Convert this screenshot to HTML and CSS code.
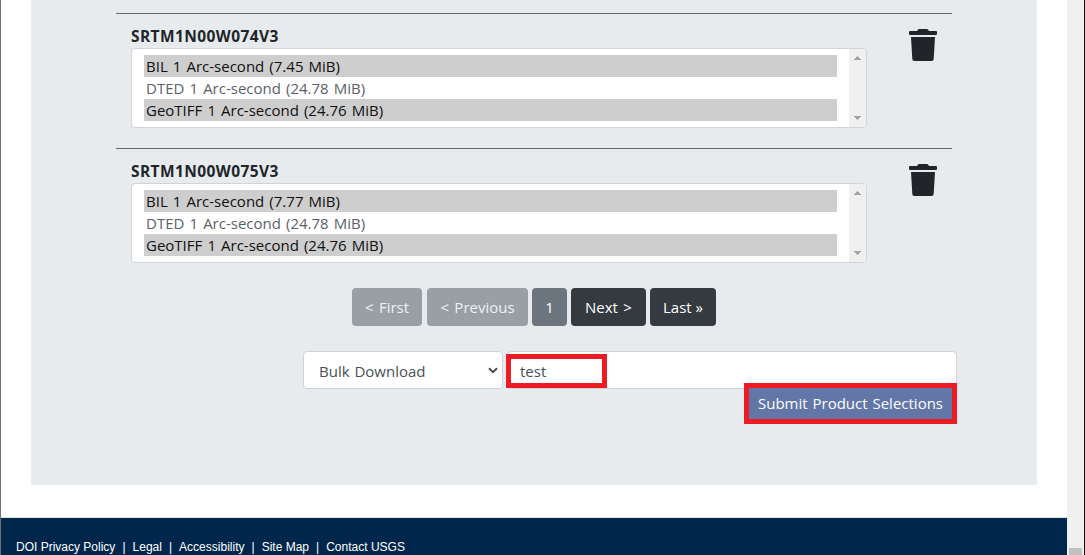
FILE: index.html
```
<!DOCTYPE html>
<html lang="en">
<head>
<meta charset="utf-8">
<title>Product Selections</title>
<link rel="stylesheet" href="styles.css">
</head>
<body>
<div class="window">
  <div class="page">
    <main class="panel">
      <section class="item">
        <div class="item-main">
          <h2 class="item-title">SRTM1N00W074V3</h2>
          <div class="listbox">
            <ul class="options">
              <li class="option selected">BIL 1 Arc-second (7.45 MiB)</li>
              <li class="option">DTED 1 Arc-second (24.78 MiB)</li>
              <li class="option selected">GeoTIFF 1 Arc-second (24.76 MiB)</li>
            </ul>
            <div class="list-scroll">
              <svg width="7" height="4" viewBox="0 0 7 4" shape-rendering="crispEdges"><path d="M3 0h1v1h1v1h1v1h1v1H0V3h1V2h1V1h1z" fill="#a3a3a3"/></svg>
              <svg width="7" height="4" viewBox="0 0 7 4" shape-rendering="crispEdges"><path d="M0 0h7v1H6v1H5v1H4v1H3V3H2V2H1V1H0z" fill="#a3a3a3"/></svg>
            </div>
          </div>
        </div>
        <svg class="trash" width="28" height="32" viewBox="0 0 28 32"><path d="M10 0h8q1 0 2 2h7q1 0 1 1v2q0 1-1 1H1q-1 0-1-1V3q0-1 1-1h7q1-2 2-2zM2 8h24l-1.300 22q-.2 2-2 2H5.300q-1.800 0-2-2z" fill="#212529"/></svg>
      </section>
      <section class="item">
        <div class="item-main">
          <h2 class="item-title">SRTM1N00W075V3</h2>
          <div class="listbox">
            <ul class="options">
              <li class="option selected">BIL 1 Arc-second (7.77 MiB)</li>
              <li class="option">DTED 1 Arc-second (24.78 MiB)</li>
              <li class="option selected">GeoTIFF 1 Arc-second (24.76 MiB)</li>
            </ul>
            <div class="list-scroll">
              <svg width="7" height="4" viewBox="0 0 7 4" shape-rendering="crispEdges"><path d="M3 0h1v1h1v1h1v1h1v1H0V3h1V2h1V1h1z" fill="#a3a3a3"/></svg>
              <svg width="7" height="4" viewBox="0 0 7 4" shape-rendering="crispEdges"><path d="M0 0h7v1H6v1H5v1H4v1H3V3H2V2H1V1H0z" fill="#a3a3a3"/></svg>
            </div>
          </div>
        </div>
        <svg class="trash" width="28" height="32" viewBox="0 0 28 32"><path d="M10 0h8q1 0 2 2h7q1 0 1 1v2q0 1-1 1H1q-1 0-1-1V3q0-1 1-1h7q1-2 2-2zM2 8h24l-1.300 22q-.2 2-2 2H5.300q-1.800 0-2-2z" fill="#212529"/></svg>
      </section>
      <nav class="pager">
        <button class="btn first off">&lt; First</button>
        <button class="btn prev off">&lt; Previous</button>
        <button class="btn num">1</button>
        <button class="btn next">Next &gt;</button>
        <button class="btn last">Last »</button>
      </nav>
      <div class="form">
        <div class="field select"><span>Bulk Download</span>
          <svg width="10" height="7" viewBox="0 0 10 7"><path d="M1 1.200l4 4 4-4" fill="none" stroke="#454c54" stroke-width="2"/></svg>
        </div>
        <div class="field input"><span class="value">test</span><div class="mark"></div></div>
      </div>
      <button class="submit">Submit Product Selections</button>
    </main>
    <footer class="footer">
      <a>DOI Privacy Policy</a><i>|</i><a>Legal</a><i>|</i><a>Accessibility</a><i>|</i><a>Site Map</a><i>|</i><a>Contact USGS</a>
    </footer>
  </div>
  <div class="scrollbar"><div class="thumb"></div></div>
</div>
</body>
</html>
```
FILE: styles.css
```
* { box-sizing: border-box; }
body {
  margin: 0;
  background: #fff;
  font-family: "Open Sans", "Noto Sans", sans-serif;
  font-size: 15px;
  color: #212529;
  overflow: hidden;
}
.window {
  display: flex;
  width: 1085px;
  height: 555px;
  border-left: 1px solid #707070;
  border-right: 1px solid;
  border-right-color: #111;
}
.page { width: 1066px; height: 555px; display: flex; flex-direction: column; }
.scrollbar { width: 17px; background: #f0f0f0; display: flex; align-items: flex-end; justify-content: center; }
.thumb { width: 13px; height: 7px; background: #c1c1c1; }
.panel {
  width: 1006px;
  height: 485px;
  margin-left: 30px;
  padding: 13px 80px 0 85px;
  background: #e7ebee;
  display: flex;
  flex-direction: column;
}
.item {
  width: 836px;
  height: 135px;
  padding: 15px 15px 0;
  border-top: 1px solid #666a6d;
  display: flex;
  justify-content: space-between;
  flex: none;
}
.item-main { width: 736px; }
.item-title {
  margin: 0;
  height: 19px;
  font-size: 15.5px;
  line-height: 14px;
  font-weight: 700;
  letter-spacing: .4px;
  white-space: nowrap;
}
.listbox {
  height: 80px;
  border: 1px solid #ced4da;
  border-radius: 4px;
  background: #fff;
  display: flex;
  justify-content: space-between;
  overflow: hidden;
}
.options { list-style: none; margin: 0; padding: 6px 0 0 12px; width: 705px; }
.option { height: 22px; line-height: 23px; padding-left: 2px; color: #5c6166; word-spacing: 1.2px; white-space: nowrap; }
.option.selected { background: #cecece; color: #101010; }
.list-scroll {
  width: 17px;
  background: #f0f0f0;
  padding: 7px 0;
  display: flex;
  flex-direction: column;
  align-items: center;
  justify-content: space-between;
}
.trash { flex: none; }
.pager { display: flex; gap: 4px; margin: 5px 0 0 236px; height: 38px; flex: none; }
.btn {
  border: 0;
  border-radius: 4px;
  padding: 0;
  background: #343a40;
  color: #fff;
  font: 15px/38px "Open Sans", "Noto Sans", sans-serif;
  word-spacing: 1.5px;
  white-space: nowrap;
}
.btn.off { background: #989fa5; color: #eff1f3; }
.first { width: 70px; margin-right: 1px; }
.prev { width: 101px; }
.btn.num { width: 35px; background: #6c757d; }
.next { width: 75px; }
.last { width: 66px; word-spacing: 0; }
.form { display: flex; gap: 4px; margin: 25px 0 0 187px; height: 38px; flex: none; }
.field {
  border: 1px solid #ced4da;
  border-radius: 4px;
  background: #fff;
  color: #495057;
  line-height: 38px;
  white-space: nowrap;
}
.select { width: 200px; padding: 0 4px 0 15px; display: flex; align-items: center; justify-content: space-between; word-spacing: 1px; }
.select span { padding-top: 2px; }
.input { width: 450px; padding-left: 12px; position: relative; }
.mark { position: absolute; left: -2px; top: 2px; width: 101px; height: 34px; border: 5px solid #ed1c24; }
.submit {
  position: relative;
  width: 213px;
  height: 41px;
  margin: -6px 0 0 628px;
  padding: 0;
  border: 5px solid #ed1c24;
  background: #6276a8;
  color: #fff;
  font: 15px/31px "Open Sans", "Noto Sans", sans-serif;
  word-spacing: 1px;
  white-space: nowrap;
  flex: none;
}
.footer {
  height: 38px;
  margin-top: 32px;
  padding: 21px 0 0 15px;
  border-top: 1px solid #dfe5e7;
  background: #00264c;
  color: #fff;
  font: 12px/16px "Liberation Sans", Arial, sans-serif;
  display: flex;
  white-space: nowrap;
}
.footer i { font-style: normal; width: 17.200px; text-align: center; }
```
